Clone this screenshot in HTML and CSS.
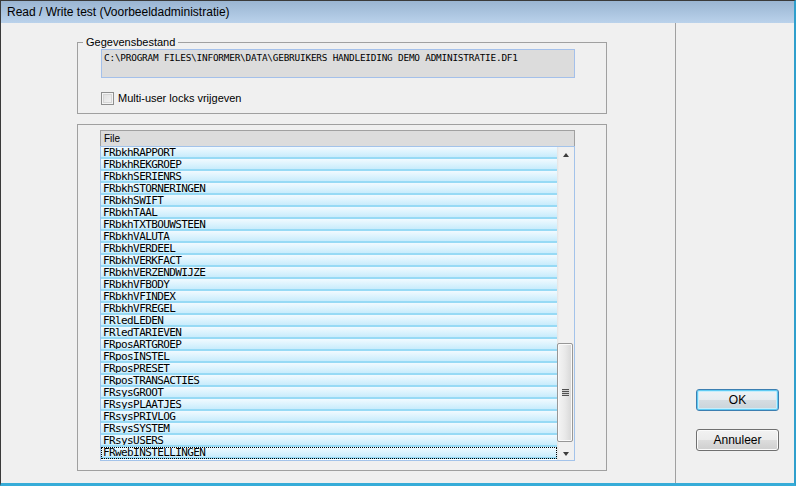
FILE: index.html
```html
<!DOCTYPE html>
<html>
<head>
<meta charset="utf-8">
<link rel="stylesheet" href="styles.css">
</head>
<body>
<div class="window">
  <div class="titlebar">Read / Write test (Voorbeeldadministratie)</div>
  <div class="client">
    <div class="main">
      <fieldset class="group group-file">
        <legend>Gegevensbestand</legend>
        <div class="pathbox">C:\PROGRAM FILES\INFORMER\DATA\GEBRUIKERS HANDLEIDING DEMO ADMINISTRATIE.DF1</div>
        <label class="check"><span class="box"></span><span class="check-text">Multi-user locks vrijgeven</span></label>
      </fieldset>
      <fieldset class="group group-list">
        <div class="listview">
          <div class="lv-header"><span class="lv-col">File</span></div>
          <div class="lv-body">
            <ul class="lv-rows">
              <li>FRbkhRAPPORT</li>
              <li>FRbkhREKGROEP</li>
              <li>FRbkhSERIENRS</li>
              <li>FRbkhSTORNERINGEN</li>
              <li>FRbkhSWIFT</li>
              <li>FRbkhTAAL</li>
              <li>FRbkhTXTBOUWSTEEN</li>
              <li>FRbkhVALUTA</li>
              <li>FRbkhVERDEEL</li>
              <li>FRbkhVERKFACT</li>
              <li>FRbkhVERZENDWIJZE</li>
              <li>FRbkhVFBODY</li>
              <li>FRbkhVFINDEX</li>
              <li>FRbkhVFREGEL</li>
              <li>FRledLEDEN</li>
              <li>FRledTARIEVEN</li>
              <li>FRposARTGROEP</li>
              <li>FRposINSTEL</li>
              <li>FRposPRESET</li>
              <li>FRposTRANSACTIES</li>
              <li>FRsysGROOT</li>
              <li>FRsysPLAATJES</li>
              <li>FRsysPRIVLOG</li>
              <li>FRsysSYSTEM</li>
              <li>FRsysUSERS</li>
              <li class="focused">FRwebINSTELLINGEN</li>
            </ul>
            <div class="scrollbar">
              <div class="sb-btn"><span class="arrow-up"></span></div>
              <div class="sb-track">
                <div class="sb-thumb"><span class="grip"></span></div>
              </div>
              <div class="sb-btn"><span class="arrow-down"></span></div>
            </div>
          </div>
        </div>
      </fieldset>
    </div>
    <div class="side">
      <button class="btn btn-default">OK</button>
      <button class="btn">Annuleer</button>
    </div>
  </div>
</div>
</body>
</html>
```

FILE: styles.css
```css
html, body {
  margin: 0;
  padding: 0;
  background: #f0f0f0;
}

.window {
  width: 796px;
  height: 486px;
  box-sizing: border-box;
  border-top: 1px solid #3a3a3a;
  border-left: 1px solid #3a3a3a;
  border-right: 2px solid #2f9fcc;
  border-bottom: 3px solid #37acd8;
  display: flex;
  flex-direction: column;
  background: #f0f0f0;
  font-family: "Liberation Sans", Arial, sans-serif;
  font-size: 12px;
  color: #000;
}

.titlebar {
  height: 22px;
  box-sizing: border-box;
  padding: 1px 0 0 6px;
  line-height: 21px;
  background: linear-gradient(#9ab5d2, #bad2eb);
  font-size: 12px;
  white-space: nowrap;
}

.client {
  flex: 1;
  display: flex;
  min-height: 0;
}

.main {
  width: 675px;
  box-sizing: border-box;
  border-right: 1px solid #a0a0a0;
  padding: 12px 0 0 76px;
}

.group {
  margin: 0;
  width: 530px;
  box-sizing: border-box;
  border: 1px solid #a0a0a0;
  min-width: 0;
}

.group-file {
  padding: 0 0 8px 0;
}

.group-file legend {
  margin-left: 5px;
  padding: 0 3px;
  line-height: 14px;
  font-size: 11px;
}

.pathbox {
  margin-left: 23px;
  width: 474px;
  height: 29px;
  box-sizing: border-box;
  border: 1px solid #a4c0ea;
  background: #dcdcdc;
  padding: 2px 0 0 2px;
  font-family: "DejaVu Sans Mono", monospace;
  font-size: 9.4px;
  letter-spacing: -0.2px;
  line-height: 12px;
  white-space: nowrap;
  overflow: hidden;
}

.check {
  display: flex;
  align-items: center;
  margin: 13px 0 0 23px;
  height: 14px;
  gap: 4px;
  font-size: 11px;
}

.box {
  width: 13px;
  height: 13px;
  box-sizing: border-box;
  border: 1px solid #8e8f8f;
  background: linear-gradient(135deg, #dcdcdc, #f6f6f6);
  box-shadow: inset 0 0 0 1px #f4f4f4, inset 0 0 0 2px #d6d6d6;
}

.group-list {
  margin-top: 10px;
  padding: 5px 0 9px 22px;
}

.listview {
  width: 475px;
}

.lv-header {
  height: 16px;
  box-sizing: border-box;
  border: 1px solid #a0a0a0;
  border-bottom: none;
  background: #dcdcdc;
  padding: 1px 0 0 3px;
  font-family: "Liberation Sans", Arial, sans-serif;
  font-size: 10px;
  line-height: 13px;
}

.lv-body {
  height: 315px;
  box-sizing: border-box;
  border: 1px solid #a3c3ea;
  display: flex;
  background: #fff;
}

.lv-rows {
  list-style: none;
  margin: 0;
  padding: 0;
  width: 456px;
}

.lv-rows li {
  height: 12px;
  box-sizing: border-box;
  border-bottom: 2px solid #97daf5;
  background: linear-gradient(#f1faff, #c8ecfc);
  padding: 2px 0 0 2px;
  line-height: 8px;
  font-family: "DejaVu Sans Mono", monospace;
  font-size: 11px;
  letter-spacing: -0.6px;
  white-space: nowrap;
  overflow: hidden;
}

.lv-rows li.focused {
  outline: 1px dotted #000;
  outline-offset: -1px;
}

.scrollbar {
  width: 17px;
  display: flex;
  flex-direction: column;
  background: linear-gradient(to right, #e3e3e3, #f0f0f0 2px, #f0f0f0);
}

.sb-btn {
  height: 17px;
  display: flex;
  align-items: center;
  justify-content: center;
}

.arrow-up {
  width: 0;
  height: 0;
  border-left: 3.5px solid transparent;
  border-right: 3.5px solid transparent;
  border-bottom: 4px solid #3c3c3c;
  margin-left: 1px;
  margin-top: -1px;
}

.arrow-down {
  width: 0;
  height: 0;
  border-left: 3.5px solid transparent;
  border-right: 3.5px solid transparent;
  border-top: 4px solid #3c3c3c;
  margin-left: 1px;
  margin-top: 4px;
}

.sb-track {
  flex: 1;
  display: flex;
  flex-direction: column;
  justify-content: flex-end;
  padding-bottom: 1px;
}

.sb-thumb {
  height: 99px;
  width: 16px;
  box-sizing: border-box;
  border: 1px solid #979797;
  border-radius: 2px;
  background: linear-gradient(to right, #f4f4f4, #e9e9e9 50%, #d6d6d6);
  box-shadow: inset 0 0 0 1px #fafafa;
  display: flex;
  align-items: center;
  justify-content: center;
}

.grip {
  width: 7px;
  height: 7px;
  background: repeating-linear-gradient(to bottom, #505050 0 1px, #d0d0d0 1px 2px);
}

.side {
  flex: 1;
  display: flex;
  flex-direction: column;
  justify-content: flex-end;
  align-items: flex-start;
  gap: 18px;
  padding: 0 0 32px 20px;
}

.btn {
  width: 83px;
  height: 22px;
  box-sizing: border-box;
  border: 1px solid #707070;
  border-radius: 3px;
  background: linear-gradient(#f2f2f2 0%, #ebebeb 50%, #dddddd 50%, #cfcfcf 100%);
  box-shadow: inset 0 0 0 1px #fbfbfb;
  font-family: "Liberation Sans", Arial, sans-serif;
  font-size: 12px;
  color: #000;
  padding: 0;
  margin: 0;
}

.btn-default {
  border-color: #3c7fb1;
  box-shadow: inset 0 0 0 1px #5fcbf3, inset 0 0 0 2px #c6eefc;
  background: linear-gradient(#eef3f6 0%, #e6ecf0 50%, #d5dde2 50%, #c9d3d9 100%);
}
```
